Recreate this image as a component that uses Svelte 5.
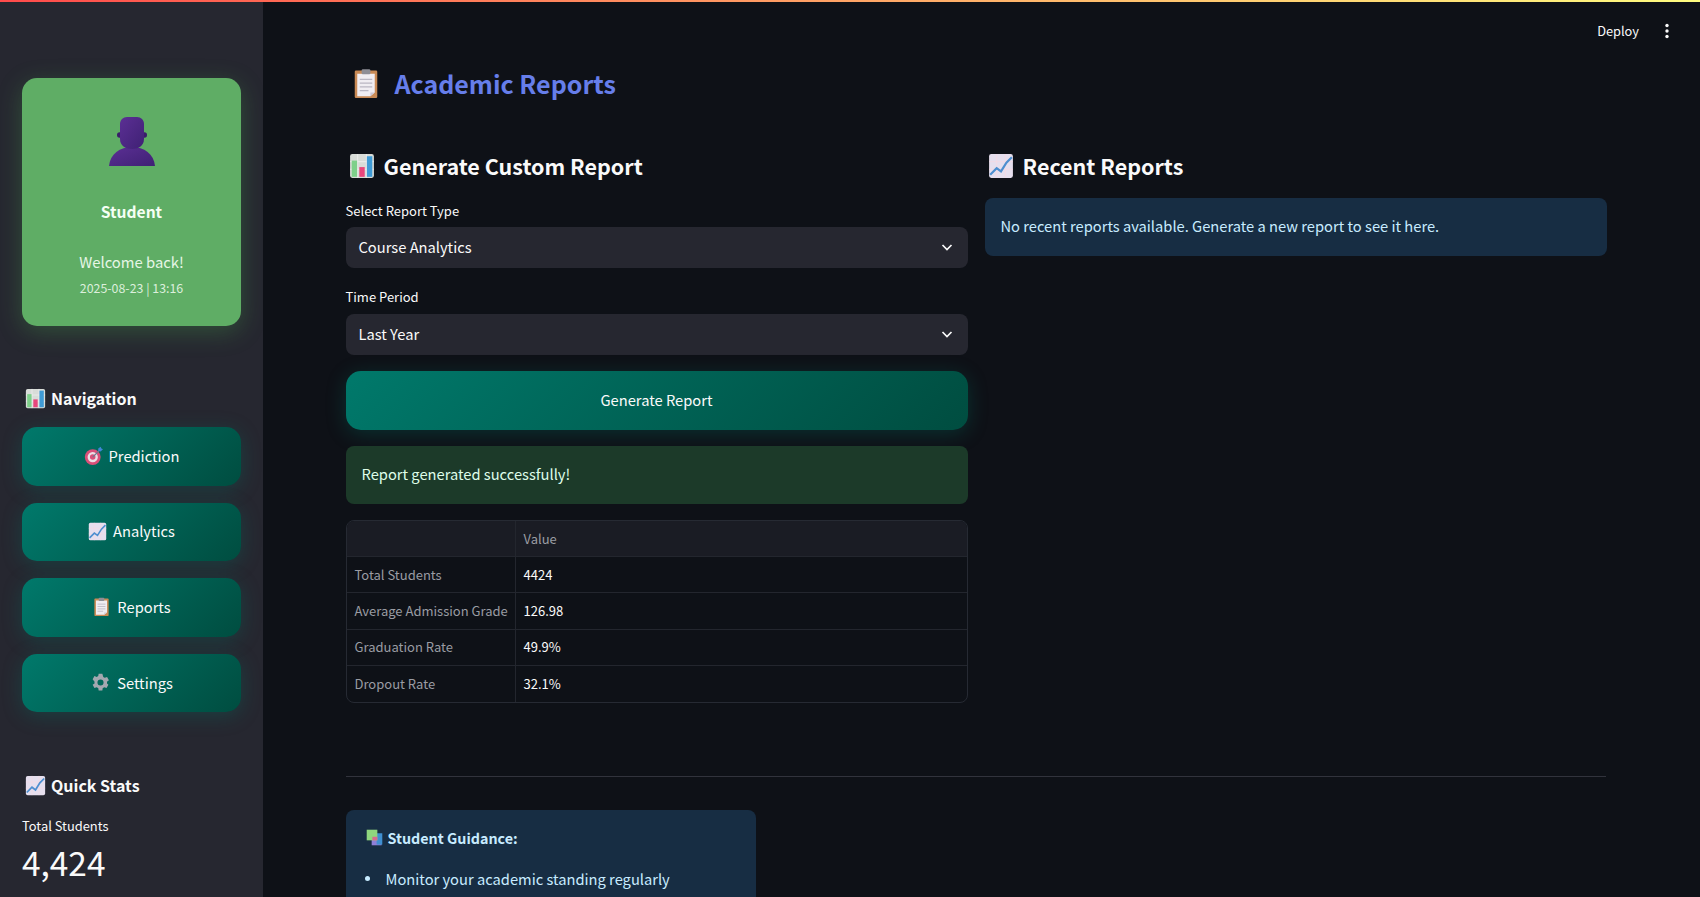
<script>
  const navItems = [
    { label: 'Prediction', icon: 'target' },
    { label: 'Analytics', icon: 'trend' },
    { label: 'Reports', icon: 'clip' },
    { label: 'Settings', icon: 'gear' }
  ];
  const rows = [
    ['Total Students', '4424'],
    ['Average Admission Grade', '126.98'],
    ['Graduation Rate', '49.9%'],
    ['Dropout Rate', '32.1%']
  ];
</script>

{#snippet chart(s)}
  <svg width={s} height={s} viewBox="0 0 24 24" class="ico" aria-hidden="true">
    <rect x="1" y="1" width="22" height="22" rx="2" fill="#d8dcd8"/>
    <path d="M1 8h22M1 15h22M8 1v22M16 1v22" stroke="#f2f2f2" stroke-width=".7"/>
    <rect x="2.500" y="7" width="5" height="15" fill="#7ed08a"/>
    <rect x="9.500" y="13" width="5" height="9" fill="#e8467c"/>
    <rect x="16.500" y="3" width="5" height="19" fill="#3f9bd6"/>
  </svg>
{/snippet}

{#snippet trend(s)}
  <svg width={s} height={s} viewBox="0 0 24 24" class="ico" aria-hidden="true">
    <rect x="1" y="1" width="22" height="22" rx="2" fill="#e6dfee"/>
    <path d="M1 8h22M1 15h22M8 1v22M16 1v22" stroke="#f6d9e2" stroke-width=".7"/>
    <path d="M2 20l6-6 4 3 5-8 5-5" fill="none" stroke="#4d8fd0" stroke-width="2"/>
  </svg>
{/snippet}

{#snippet clip(s)}
  <svg width={s} height={s} viewBox="0 0 24 24" class="ico" aria-hidden="true">
    <rect x="3" y="2" width="18" height="22" rx="1" fill="#c98a55"/>
    <path d="M5 4.500h14v15l-3.500 3H5z" fill="#f0edf2"/>
    <path d="M15.500 22.500v-3h3.500z" fill="#cfc9d4"/>
    <path d="M7 9h10M7 12h10M7 15h10M7 18h7" stroke="#b9b6c2" stroke-width="1"/>
    <rect x="8.500" y="1" width="7" height="4" rx="1" fill="#8e8e96"/>
  </svg>
{/snippet}

{#snippet target(s)}
  <svg width={s} height={s} viewBox="0 0 24 24" class="ico" aria-hidden="true">
    <circle cx="11" cy="14" r="10" fill="#d94f78"/>
    <circle cx="11" cy="14" r="6.500" fill="#ecdfe6"/>
    <circle cx="11" cy="14" r="3.500" fill="#d94f78"/>
    <path d="M11 14L20 5" stroke="#6a7a90" stroke-width="1.500"/>
    <path d="M18 3l3-2 1 2 2 1-3 3-3-1z" fill="#3f86d6"/>
  </svg>
{/snippet}

{#snippet gear(s)}
  <svg width={s} height={s} viewBox="0 0 24 24" class="ico" aria-hidden="true">
    <path fill="#a3a8b0" fill-rule="evenodd" d="M19.400 13a7.600 7.600 0 0 0 0-2l2.200-1.700-2.100-3.600-2.600 1a7.600 7.600 0 0 0-1.700-1L14.100 2H9.900l-.5 2.700a7.600 7.600 0 0 0-1.700 1l-2.600-1-2.100 3.600L5.200 11a7.600 7.600 0 0 0 0 2L3 14.700l2.100 3.600 2.600-1a7.600 7.600 0 0 0 1.700 1l.5 2.700h4.200l.5-2.700a7.600 7.600 0 0 0 1.700-1l2.600 1 2.100-3.600zM12 15.500a3.500 3.500 0 1 1 0-7 3.500 3.500 0 0 1 0 7z"/>
  </svg>
{/snippet}

{#snippet books(s)}
  <svg width={s} height={s} viewBox="0 0 24 24" class="ico" aria-hidden="true">
    <rect x="8" y="9" width="14" height="14" fill="#8f7fd8"/>
    <rect x="15" y="6" width="8" height="16" fill="#3f8fd0"/>
    <rect x="1" y="1" width="15" height="15" fill="#8fd67e"/>
    <rect x="9" y="11" width="7" height="5" fill="#d86a8e"/>
  </svg>
{/snippet}

{#snippet person()}
  <svg width="48" height="50" viewBox="0 0 48 50" aria-hidden="true">
    <defs>
      <linearGradient id="pg" x1="0" y1="0" x2="1" y2="1">
        <stop offset="0" stop-color="#5b2f94"/>
        <stop offset="1" stop-color="#3f2174"/>
      </linearGradient>
    </defs>
    <ellipse cx="11.500" cy="18" rx="2.500" ry="2.800" fill="#3a1d6a"/>
    <ellipse cx="36.500" cy="18" rx="2.500" ry="2.800" fill="#3a1d6a"/>
    <path d="M1 49c1-12 11-19 23-19s22 7 23 19z" fill="url(#pg)"/>
    <path d="M12 7c0-4 3-7 7-7h10c4 0 7 3 7 7v15c0 7-6 10-12 10s-12-3-12-10z" fill="url(#pg)"/>
  </svg>
{/snippet}

{#snippet icon(name)}
  {#if name === 'target'}{@render target(19)}
  {:else if name === 'trend'}{@render trend(19)}
  {:else if name === 'clip'}{@render clip(19)}
  {:else}{@render gear(21)}{/if}
{/snippet}

{#snippet chevron()}
  <svg width="16" height="16" viewBox="0 0 16 16" aria-hidden="true">
    <path d="M3.500 6l4.500 4.500L12.500 6" fill="none" stroke="#fafafa" stroke-width="1.700"/>
  </svg>
{/snippet}

<div class="page">
  <div class="rainbow"></div>
  <div class="shell">
    <aside class="sidebar">
      <section class="profile">
        {@render person()}
        <div class="role">Student</div>
        <div class="welcome">Welcome back!</div>
        <div class="date">2025-08-23 | 13:16</div>
      </section>

      <h3 class="side-h nav-h">{@render chart(21)}<span>Navigation</span></h3>
      <nav class="nav">
        {#each navItems as item}
          <button class="nav-btn">{@render icon(item.icon)}<span>{item.label}</span></button>
        {/each}
      </nav>

      <h3 class="side-h stats-h">{@render trend(21)}<span>Quick Stats</span></h3>
      <div class="metric-label">Total Students</div>
      <div class="metric">4,424</div>
    </aside>

    <main class="main">
      <header class="topbar">
        <span class="deploy">Deploy</span>
        <svg width="4" height="16" viewBox="0 0 4 16" aria-hidden="true">
          <circle cx="2" cy="2.500" r="1.700" fill="#fafafa"/>
          <circle cx="2" cy="8" r="1.700" fill="#fafafa"/>
          <circle cx="2" cy="13.500" r="1.700" fill="#fafafa"/>
        </svg>
      </header>

      <div class="content">
        <h1 class="title">{@render clip(30)}<span>Academic Reports</span></h1>

        <div class="cols">
          <div class="col">
            <h2 class="h2">{@render chart(26)}<span>Generate Custom Report</span></h2>
            <div class="label first">Select Report Type</div>
            <div class="select"><span>Course Analytics</span>{@render chevron()}</div>
            <div class="label second">Time Period</div>
            <div class="select"><span>Last Year</span>{@render chevron()}</div>
            <button class="gen">Generate Report</button>
            <div class="alert success">Report generated successfully!</div>
            <div class="table">
              <div class="tr head"><div class="th"></div><div class="td">Value</div></div>
              {#each rows as r}
                <div class="tr"><div class="th">{r[0]}</div><div class="td val">{r[1]}</div></div>
              {/each}
            </div>
          </div>
          <div class="col">
            <h2 class="h2">{@render trend(26)}<span>Recent Reports</span></h2>
            <div class="alert info recent">No recent reports available. Generate a new report to see it here.</div>
          </div>
        </div>

        <hr class="rule" />

        <section class="guidance">
          <div class="g-title">{@render books(17)}<strong>Student Guidance:</strong></div>
          <ul>
            <li>Monitor your academic standing regularly</li>
          </ul>
        </section>
      </div>
    </main>
  </div>
</div>

<style>
  :global(body) {
    margin: 0;
    background: #0e1117;
    overflow: hidden;
  }
  .page {
    height: 897px;
    overflow: hidden;
    display: flex;
    flex-direction: column;
    font-family: "Noto Sans CJK SC", "Noto Sans", sans-serif;
    color: #fafafa;
    font-size: 14.700px;
    line-height: 24px;
  }
  .rainbow {
    height: 2px;
    flex: none;
    background: linear-gradient(90deg, #ff4b4b, #fffd80);
  }
  .shell {
    flex: 1;
    display: flex;
    min-height: 0;
  }
  .ico { flex: none; }

  .sidebar {
    width: 263px;
    flex: none;
    box-sizing: border-box;
    background: #262730;
    padding: 76px 22px 0;
    overflow: hidden;
  }
  .profile {
    height: 248px;
    box-sizing: border-box;
    padding-top: 39px;
    background: #5fad65;
    border-radius: 15px;
    box-shadow: 0 6px 24px rgba(76, 175, 80, .3);
    display: flex;
    flex-direction: column;
    align-items: center;
  }
  .role {
    margin-top: 32px;
    font-weight: 700;
    font-size: 15.600px;
    color: #f4fff4;
  }
  .welcome {
    margin-top: 27px;
    font-size: 14.800px;
    color: #e6f6e6;
  }
  .date {
    margin-top: 2px;
    font-size: 12.400px;
    color: #dcefdc;
  }
  .side-h {
    display: flex;
    align-items: center;
    gap: 5px;
    margin: 0;
    padding-left: 3px;
    font-size: 16px;
    font-weight: 700;
    line-height: 24px;
  }
  .nav-h { margin-top: 60px; }
  .stats-h { margin-top: 61px; }
  .nav {
    margin-top: 17px;
    display: flex;
    flex-direction: column;
    gap: 17px;
  }
  .nav-btn, .gen {
    border: 0;
    color: #fafafa;
    font: inherit;
    background: linear-gradient(135deg, #00796b, #004d40);
    box-shadow: 0 4px 20px rgba(0, 121, 107, .3);
    border-radius: 15px;
    display: flex;
    align-items: center;
    justify-content: center;
    gap: 6px;
    padding: 0 0 1px;
  }
  .nav-btn { height: 58.600px; }
  .metric-label {
    margin-top: 19px;
    font-size: 12.900px;
    line-height: 20px;
  }
  .metric {
    margin-top: 4px;
    font-size: 33.400px;
    line-height: 44px;
  }

  .main {
    flex: 1;
    min-width: 0;
  }
  .topbar {
    height: 56px;
    box-sizing: border-box;
    padding: 1px 31px 0 0;
    display: flex;
    align-items: center;
    justify-content: flex-end;
    gap: 26px;
    font-size: 12.800px;
  }
  .content {
    padding: 0 94.500px 0 82.500px;
  }
  .title {
    display: flex;
    align-items: center;
    gap: 14px;
    margin: 7px 0 0 5px;
    font-size: 25px;
    line-height: 36px;
    font-weight: 600;
    color: #667eea;
  }
  .cols {
    margin-top: 49px;
    display: grid;
    grid-template-columns: 622px 622px;
    gap: 17px;
  }
  .col { min-width: 0; }
  .h2 {
    display: flex;
    align-items: center;
    gap: 9px;
    margin: 0 0 0 3px;
    font-size: 21.500px;
    line-height: 32px;
    font-weight: 600;
  }
  .label {
    font-size: 13px;
    line-height: 20px;
  }
  .label.first { margin-top: 19px; }
  .label.second { margin-top: 19px; }
  .select {
    margin-top: 6px;
    height: 41px;
    box-sizing: border-box;
    padding: 0 13px 2px;
    background: #262730;
    border-radius: 8px;
    display: flex;
    align-items: center;
    justify-content: space-between;
  }
  .label.second + .select { margin-top: 7px; }
  .gen {
    width: 100%;
    height: 59px;
    margin-top: 16px;
  }
  .alert {
    box-sizing: border-box;
    border-radius: 8px;
    padding: 0 16px 2px;
    display: flex;
    align-items: center;
  }
  .success {
    margin-top: 16px;
    height: 58px;
    background: #1c3a29;
    color: #dffde9;
  }
  .info {
    background: #172d43;
    color: #c7ebff;
  }
  .recent {
    margin-top: 16px;
    height: 58px;
  }
  .table {
    margin-top: 16px;
    border: 1px solid #262a33;
    border-radius: 8px;
    overflow: hidden;
    font-size: 13px;
  }
  .tr {
    display: grid;
    grid-template-columns: 169px 1fr;
    height: 36.200px;
    box-sizing: border-box;
    border-bottom: 1px solid #23262e;
  }
  .tr:last-child { border-bottom: 0; }
  .tr.head { background: #1a1c24; color: #9a9ca3; }
  .th, .td {
    display: flex;
    align-items: center;
    padding: 0 8px;
    white-space: nowrap;
  }
  .th {
    color: #9a9ca3;
    border-right: 1px solid #23262e;
  }
  .val { color: #fafafa; }
  .rule {
    margin: 73px 0 0;
    border: 0;
    border-top: 1px solid #31333c;
  }
  .guidance {
    margin-top: 33px;
    width: 410px;
    height: 140px;
    box-sizing: border-box;
    padding: 16px 20px;
    background: #172d43;
    border-radius: 8px;
    color: #c7ebff;
  }
  .g-title {
    display: flex;
    align-items: center;
    gap: 5px;
    font-size: 14.300px;
  }
  .guidance ul {
    list-style: none;
    margin: 17px 0 0 -1px;
    padding: 0;
  }
  .guidance li {
    display: flex;
    align-items: center;
  }
  .guidance li::before {
    content: "";
    flex: none;
    width: 5px;
    height: 5px;
    margin-right: 16px;
    border-radius: 50%;
    background: #c7ebff;
  }
</style>
